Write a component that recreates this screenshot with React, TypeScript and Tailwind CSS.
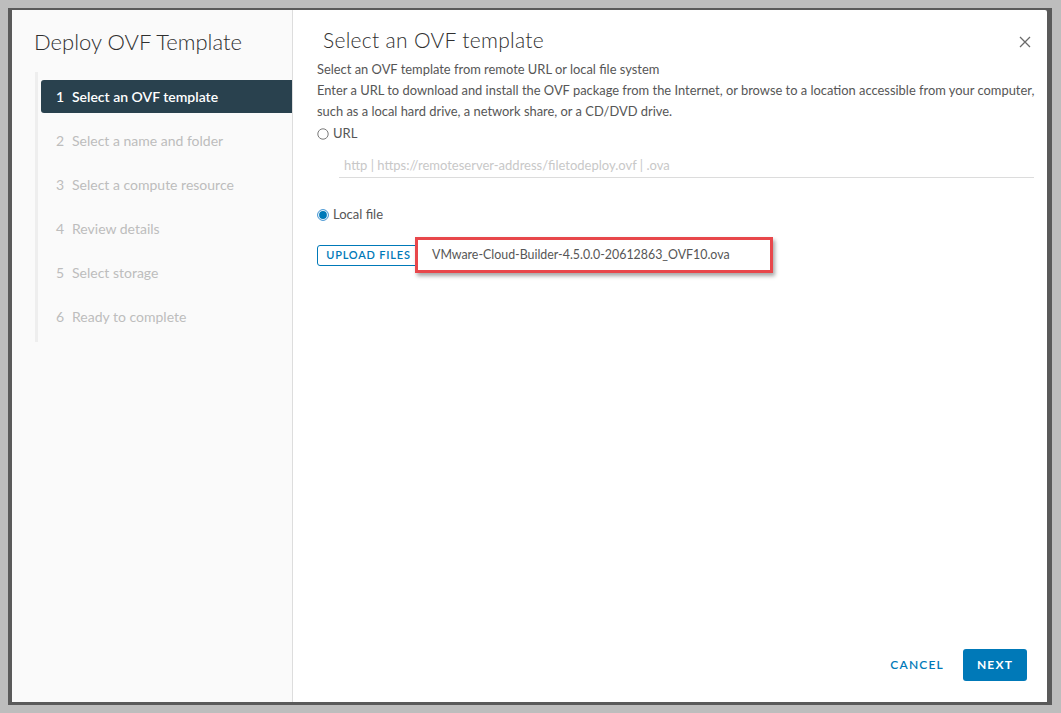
import * as React from 'react'

const steps = [
  'Select an OVF template',
  'Select a name and folder',
  'Select a compute resource',
  'Review details',
  'Select storage',
  'Ready to complete',
]

function Radio({ checked }: { checked?: boolean }): React.ReactElement {
  if (checked) {
    return (
      <svg width="12" height="12" viewBox="0 0 12 12" className="shrink-0">
        <circle cx="6" cy="6" r="5.4" fill="#fff" stroke="#3b8fd0" strokeWidth="1" />
        <circle cx="6" cy="6" r="3.9" fill="#0079b8" />
      </svg>
    )
  }
  return (
    <svg width="12" height="12" viewBox="0 0 12 12" className="shrink-0">
      <circle cx="6" cy="6" r="5.2" fill="#fff" stroke="#7a7a7a" strokeWidth="1" />
    </svg>
  )
}

function StepNav(): React.ReactElement {
  return (
    <nav className="mt-[15px] ml-[23px] border-l-[3px] border-[#eeeeee] pt-[8px] pb-[9px] flex flex-col gap-[11px]">
      {steps.map((label, i) => {
        const active = i === 0
        return (
          <div
            key={label}
            className={
              active
                ? 'ml-[3px] h-[33px] flex items-center pl-[15px] rounded-l-[3px] bg-[#29414e] text-white font-semibold'
                : 'ml-[3px] h-[33px] flex items-center pl-[15px] text-[#bdbdbd]'
            }
          >
            <span className="w-[16px]">{i + 1}</span>
            <span>{label}</span>
          </div>
        )
      })}
    </nav>
  )
}

export default function App(): React.ReactElement {
  return (
    <div
      className="w-[1061px] h-[713px] bg-[#bdbdbd] pt-[8px] pl-[8px] overflow-hidden"
      style={{ fontFamily: 'Lato, "Open Sans", sans-serif' }}
    >
      <div className="w-[1044px] h-[697px] bg-[#5a5a5a] pl-[4px] pt-[2px] pr-[5px] pb-[3px]">
        <div className="w-full h-full bg-white rounded-tr-[2px] flex">
          {/* wizard steps */}
          <aside className="w-[281px] shrink-0 h-full bg-[#fafafa] border-r border-[#dddddd] pt-[17px] text-[14px]">
            <h1 className="pl-[22px] text-[22px] leading-[30px] font-light text-[#2f2f2f]">
              Deploy OVF Template
            </h1>
            <StepNav />
          </aside>

          {/* step content */}
          <main className="flex-1 min-w-0 h-full flex flex-col pl-[24px] pr-[16px] pt-[16px] pb-[21px]">
            <div className="flex items-start justify-between h-[28px]">
              <h2 className="pl-[6px] text-[21px] leading-[28px] font-light tracking-[0.3px] text-[#2f2f2f]">
                Select an OVF template
              </h2>
              <button className="mt-[10px] text-[#6a6a6a]">
                <svg width="12" height="12" viewBox="0 0 12 12">
                  <path d="M1 1 L11 11 M11 1 L1 11" stroke="currentColor" strokeWidth="1.3" fill="none" />
                </svg>
              </button>
            </div>

            <div className="mt-[5px] -mr-[6px] text-[12.9px] leading-[21px] text-[#565656] whitespace-nowrap">
              <p>Select an OVF template from remote URL or local file system</p>
              <p>
                Enter a URL to download and install the OVF package from the Internet, or browse to a location accessible
                from your computer,
              </p>
              <p>such as a local hard drive, a network share, or a CD/DVD drive.</p>
            </div>

            <label className="mt-[2px] h-[20px] flex items-center gap-[4px] text-[13px] text-[#565656]">
              <Radio />
              <span>URL</span>
            </label>
            <div className="mt-[11px] ml-[22px] w-[695px] h-[23px] border-b border-[#dcdcdc] pl-[5px] flex items-center text-[13px] text-[#c8c8c8] whitespace-nowrap">
              http | https://remoteserver-address/filetodeploy.ovf | .ova
            </div>

            <label className="mt-[27px] h-[20px] flex items-center gap-[4px] text-[13px] text-[#565656]">
              <Radio checked />
              <span>Local file</span>
            </label>

            <div className="mt-[12px] flex items-center">
              <button className="w-[103px] shrink-0 h-[21px] border border-[#0079b8] rounded-[3px] text-[11px] font-semibold tracking-[0.8px] text-[#0079b8] bg-white">
                UPLOAD FILES
              </button>
              <div className="relative z-10 -ml-[5px] w-[358px] shrink-0 h-[36px] border-[3px] border-[#e8474b] bg-white shadow-[2px_3px_4px_rgba(0,0,0,0.35)] pl-[14px] flex items-center text-[12.4px] text-[#565656] whitespace-nowrap">
                VMware-Cloud-Builder-4.5.0.0-20612863_OVF10.ova
              </div>
            </div>

            <div className="mt-auto flex items-center justify-end pr-[4px]">
              <button className="mr-[19px] text-[12px] font-semibold tracking-[1.2px] text-[#0079b8]">CANCEL</button>
              <button className="w-[64px] h-[32px] rounded-[3px] bg-[#0079b8] text-white text-[12px] font-bold tracking-[1.2px]">
                NEXT
              </button>
            </div>
          </main>
        </div>
      </div>
    </div>
  )
}
